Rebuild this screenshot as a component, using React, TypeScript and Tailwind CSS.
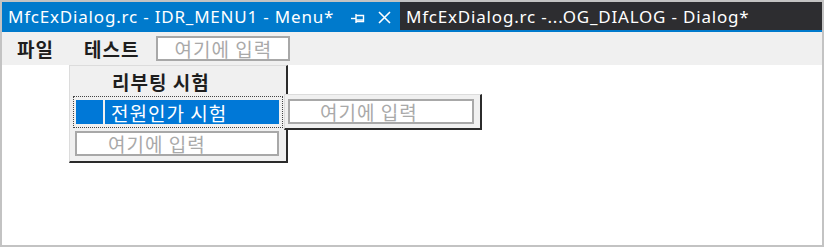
import React from "react";

const ko = { fontFamily: '"Noto Sans CJK KR", "Noto Sans", sans-serif' };
const ui = { fontFamily: '"Noto Sans", "Open Sans", sans-serif' };

function PinIcon() {
  return (
    <svg width="14" height="12" viewBox="0 0 14 12" fill="none" stroke="white" strokeWidth="1.4">
      <path d="M0 6.5H5" />
      <path d="M5 2V11" />
      <path d="M5 3.5H12.5V9.5H5" />
      <path d="M5 8H12.5" />
    </svg>
  );
}

function CloseIcon() {
  return (
    <svg width="13" height="13" viewBox="0 0 13 13" fill="none" stroke="white" strokeWidth="1.6">
      <path d="M1 1L12 12M12 1L1 12" />
    </svg>
  );
}

function InputBox({ className, pad }: { className: string; pad: string }) {
  return (
    <div className={`border-2 border-[#a8a8a8] bg-white h-[25px] flex items-center text-[19px] tracking-[1px] leading-none text-[#a9a9a9] ${pad} ${className}`} style={ko}>
      여기에 입력
    </div>
  );
}

export default function App() {
  return (
    <div className="relative w-[824px] h-[247px] border-2 border-[#c3c3c3] bg-white overflow-hidden">
      {/* document tabs */}
      <div className="flex h-[28px]">
        <div className="w-[398px] bg-[#007acc] text-white flex items-center pl-[6px] pr-[9px]">
          <span className="text-[17px] tracking-[0.8px] leading-none" style={ui}>MfcExDialog.rc - IDR_MENU1 - Menu*</span>
          <span className="ml-auto mr-[13px] mt-[3px]"><PinIcon /></span>
          <span className="mt-[2px]"><CloseIcon /></span>
        </div>
        <div className="flex-1 bg-[#2d2d30] text-white flex items-center pl-[6px]">
          <span className="text-[17px] tracking-[0.8px] leading-none" style={ui}>MfcExDialog.rc -...OG_DIALOG - Dialog*</span>
        </div>
      </div>
      <div className="h-[2px] bg-[#007acc]" />

      {/* menu bar */}
      <div className="h-[33px] bg-[#f0f0f0] flex items-center pl-[15px]">
        <span className="text-[19px] tracking-[1px] font-bold text-[#1e1e1e] leading-none" style={ko}>파일</span>
        <span className="ml-[30px] text-[19px] tracking-[1px] font-bold text-[#1e1e1e] leading-none" style={ko}>테스트</span>
        <InputBox className="ml-[17px] w-[134px]" pad="justify-center" />
      </div>

      {/* dropdown */}
      <div className="absolute left-[67px] top-[63px] w-[219px] h-[98px] bg-[#f0f0f0] border-l border-t border-[#dcdcdc] border-r-2 border-b-2 border-r-[#2b2b2b] border-b-[#2b2b2b] flex flex-col px-[3px]">
        <div className="h-[30px] flex items-center pl-[39px]">
          <span className="text-[19px] tracking-[1px] font-bold text-[#1e1e1e] leading-none" style={ko}>리부팅 시험</span>
        </div>
        <div className="h-[32px] border border-dotted border-[#444] flex items-center gap-[2px] px-[2px]">
          <div className="w-[27px] h-[24px] bg-[#0078d7]" />
          <div className="flex-1 h-[24px] bg-[#0078d7] flex items-center pl-[6px] mr-[1px]">
            <span className="text-[19px] tracking-[1px] text-white leading-none" style={ko}>전원인가 시험</span>
          </div>
        </div>
        <InputBox className="mt-[3px] ml-[2px] w-[204px]" pad="pl-[31px]" />
      </div>

      {/* submenu */}
      <div className="absolute left-[282px] top-[92px] w-[198px] h-[36px] bg-[#f0f0f0] border-l border-t border-[#dcdcdc] border-r-2 border-b-2 border-r-[#2b2b2b] border-b-[#2b2b2b] pl-[3px] pt-[4px]">
        <InputBox className="w-[186px]" pad="pl-[30px]" />
      </div>
    </div>
  );
}
